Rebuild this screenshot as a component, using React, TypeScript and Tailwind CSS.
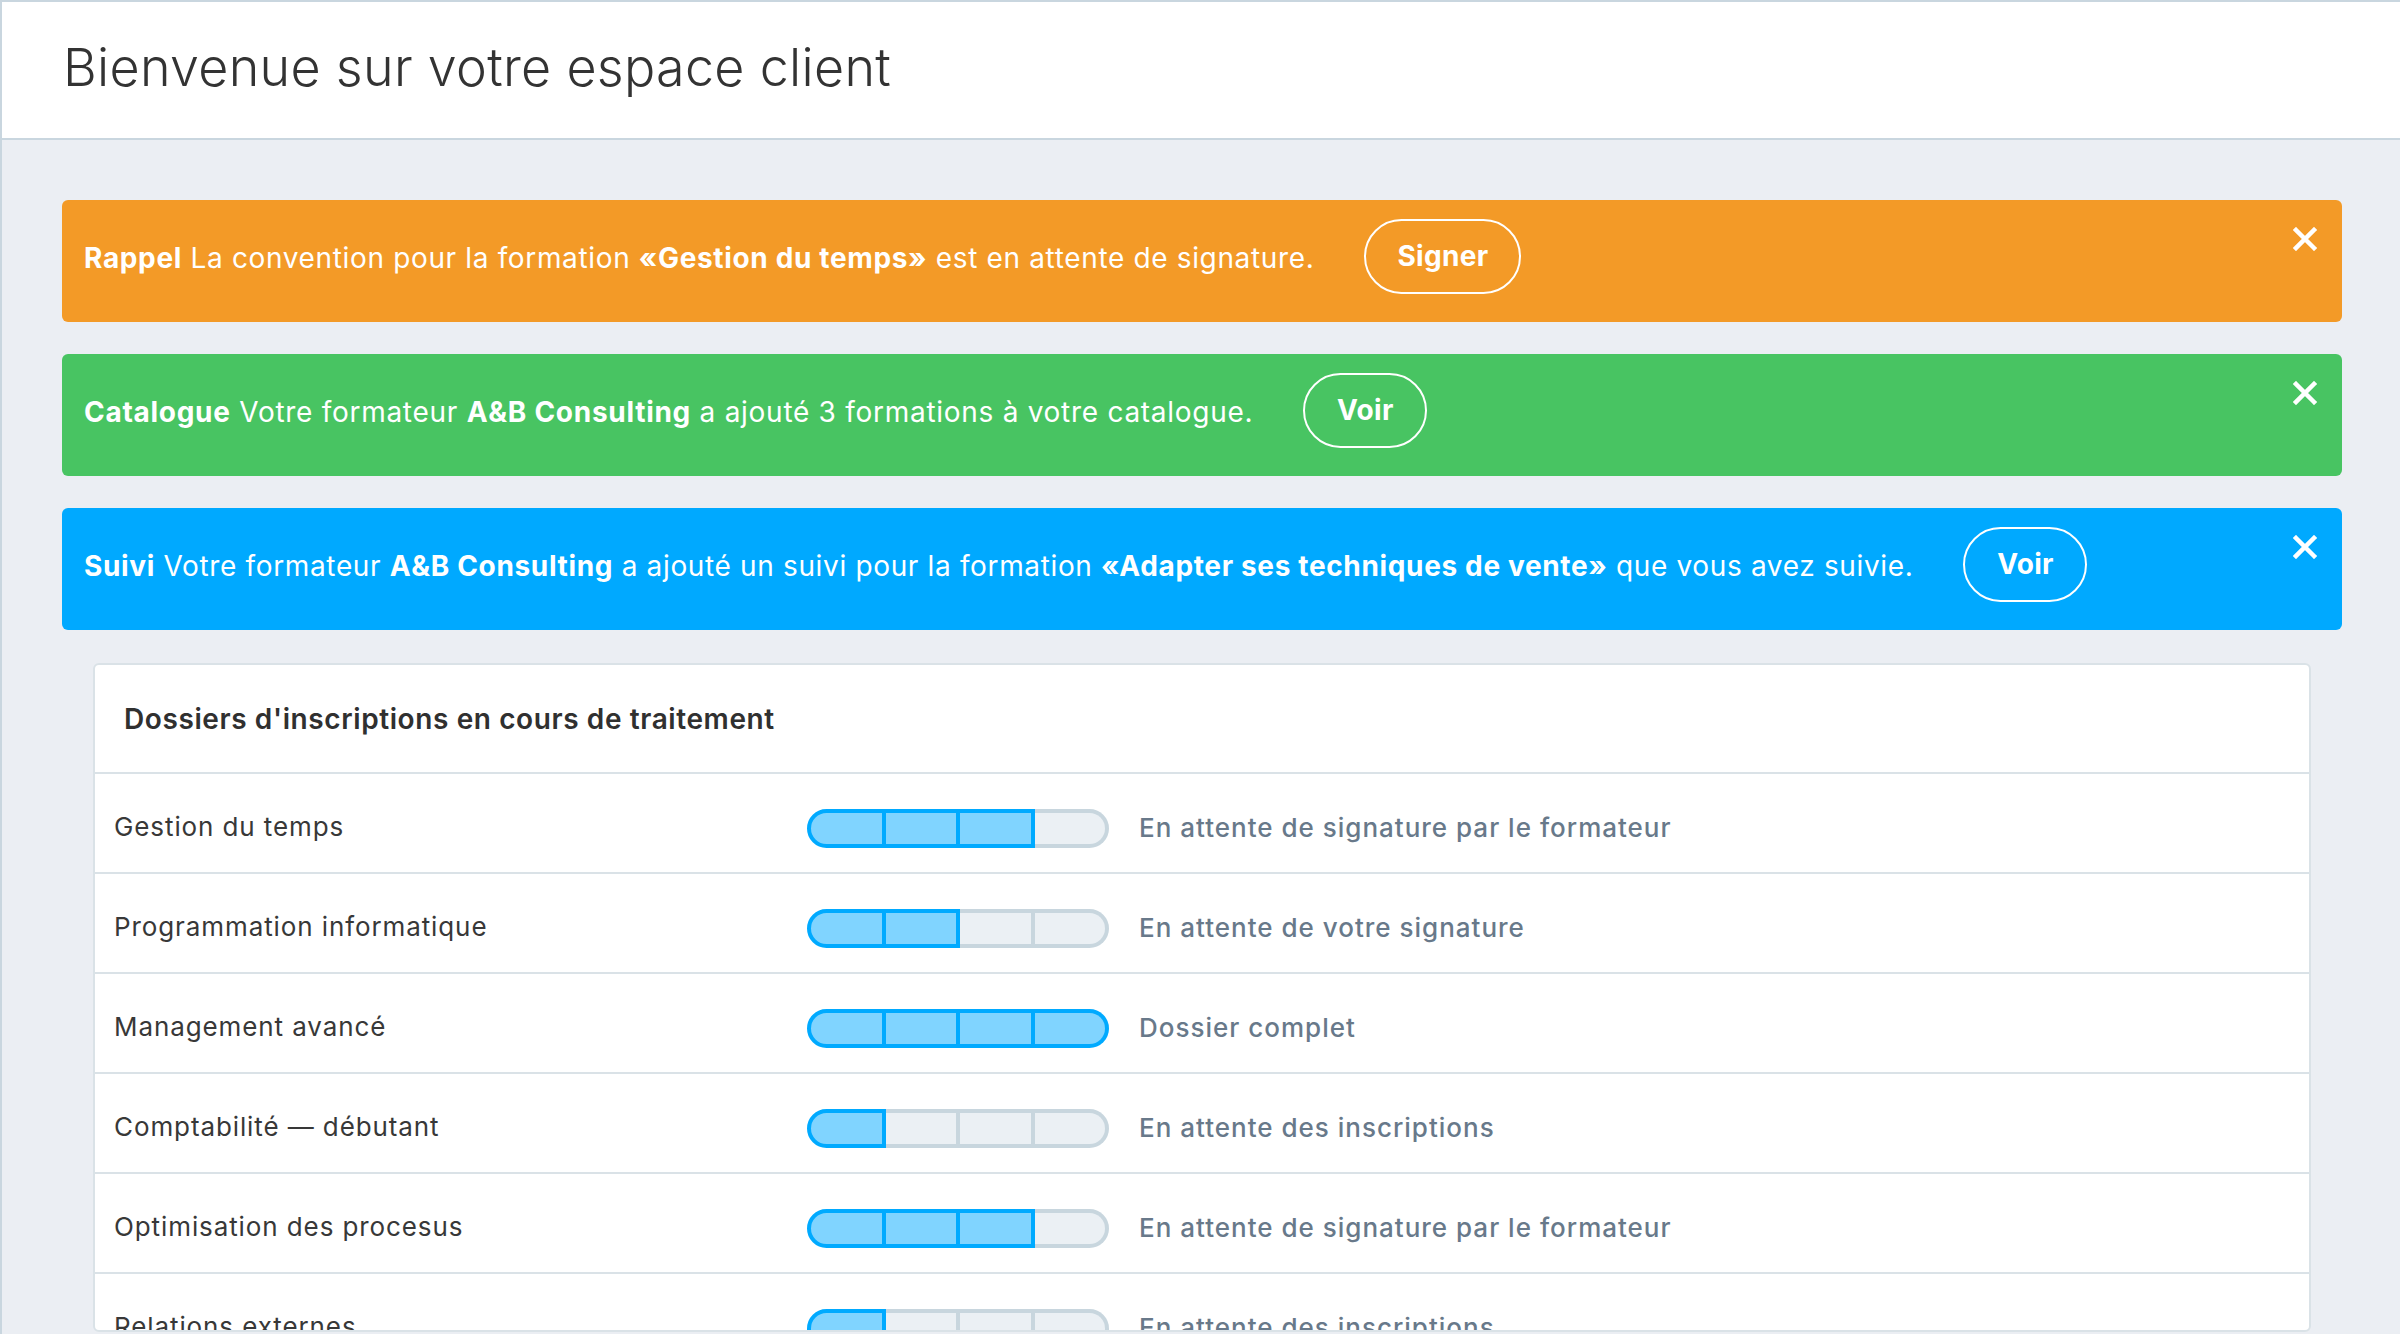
import React from "react";

const FONT = "font-['Inter',_'Noto_Sans',_sans-serif]";

function CloseIcon() {
  return (
    <svg viewBox="0 0 24 24" className="w-[24px] h-[24px]" fill="none">
      <path d="M3 3 L21 21 M21 3 L3 21" stroke="white" strokeWidth="4.5" strokeLinecap="square" />
    </svg>
  );
}

type BannerProps = {
  bg: string;
  children: React.ReactNode;
  button: string;
  bw: string;
  tracking: string;
};

function Banner({ bg, children, button, bw, tracking }: BannerProps) {
  return (
    <div className={`relative h-[122px] rounded-[6px] flex items-center pl-[22px] pb-[6px] ${bg}`}>
      <span className={`text-white text-[28px] ${tracking} leading-none whitespace-nowrap`}>{children}</span>
      <button
        className={`ml-[50px] mb-[4px] h-[75px] ${bw} flex items-center justify-center rounded-full border-2 border-white text-white text-[28px] font-bold tracking-[0.3px] leading-none`}
      >
        {button}
      </button>
      <div className="absolute top-[27px] right-[25px]">
        <CloseIcon />
      </div>
    </div>
  );
}

function Progress({ filled }: { filled: number }) {
  return (
    <div className="flex w-[302px] h-[39px] shrink-0">
      {[0, 1, 2, 3].map((i) => {
        const on = i < filled;
        const color = on ? "bg-[#80d4ff] border-[#00aaff]" : "bg-[#ebf0f4] border-[#c8d6de]";
        const shape = i === 0 ? "border-l-4 rounded-l-full" : i === 3 ? "rounded-r-full" : "";
        return <div key={i} className={`flex-1 border-y-4 border-r-4 ${color} ${shape}`} />;
      })}
    </div>
  );
}

const rows = [
  { label: "Gestion du temps", n: 3, status: "En attente de signature par le formateur" },
  { label: "Programmation informatique", n: 2, status: "En attente de votre signature" },
  { label: "Management avancé", n: 4, status: "Dossier complet" },
  { label: "Comptabilité — débutant", n: 1, status: "En attente des inscriptions" },
  { label: "Optimisation des procesus", n: 3, status: "En attente de signature par le formateur" },
  { label: "Relations externes", n: 1, status: "En attente des inscriptions" },
];

export default function App() {
  return (
    <div className={`min-h-screen w-full bg-[#ebeef3] border-l-2 border-t-2 border-[#c9d6df] ${FONT}`}>
      <header className="h-[138px] bg-white border-b-2 border-[#c9d6df] flex items-center pl-[61px] pb-[4px]">
        <h1 className="text-[52px] font-light tracking-[0.3px] text-[#333333] leading-none">
          Bienvenue sur votre espace client
        </h1>
      </header>
      <main className="pl-[60px] pr-[58px] pt-[60px]">
        <div className="flex flex-col gap-[32px]">
          <Banner bg="bg-[#f39a27]" button="Signer" bw="w-[157px]" tracking="tracking-[0.65px]">
            <b className="font-bold">Rappel</b> La convention pour la formation <b className="font-bold">«Gestion du temps»</b> est en attente de signature.
          </Banner>
          <Banner bg="bg-[#48c462]" button="Voir" bw="w-[124px]" tracking="tracking-[0.72px]">
            <b className="font-bold">Catalogue</b> Votre formateur <b className="font-bold">A&amp;B Consulting</b> a ajouté 3 formations à votre catalogue.
          </Banner>
          <Banner bg="bg-[#00a9ff]" button="Voir" bw="w-[124px]" tracking="tracking-[0.65px]">
            <b className="font-bold">Suivi</b> Votre formateur <b className="font-bold">A&amp;B Consulting</b> a ajouté un suivi pour la formation <b className="font-bold">«Adapter ses techniques de vente»</b> que vous avez suivie.
          </Banner>
        </div>
        <section className="mx-[31px] mt-[33px] h-[669px] overflow-hidden bg-white border-2 border-[#dae2e7] rounded-[6px]">
          <div className="h-[109px] border-b-2 border-[#dae2e7] flex items-center pl-[29px]">
            <span className="text-[28px] font-semibold tracking-[0.6px] text-[#303030] leading-none">
              Dossiers d'inscriptions en cours de traitement
            </span>
          </div>
          {rows.map((r, i) => (
            <div key={i} className="h-[100px] border-b-2 border-[#dae2e7] flex items-center pt-[10px]">
              <div className="w-[712px] shrink-0 pl-[19px]">
                <span className="text-[26px] tracking-[0.9px] text-[#383838] leading-none">{r.label}</span>
              </div>
              <Progress filled={r.n} />
              <span className="ml-[30px] text-[26px] font-medium tracking-[1px] text-[#68798a] leading-none">
                {r.status}
              </span>
            </div>
          ))}
        </section>
      </main>
    </div>
  );
}
